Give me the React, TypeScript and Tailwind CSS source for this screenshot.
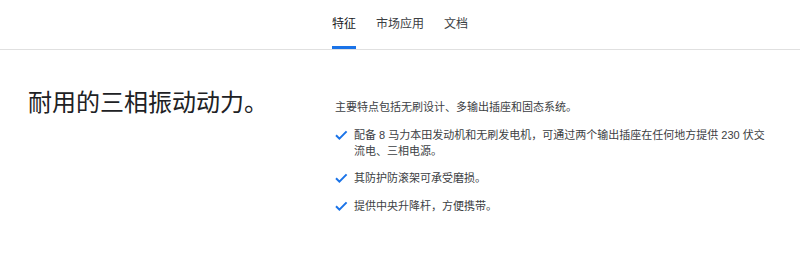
import React from 'react'

const tabs = [
  { label: '特征', active: true },
  { label: '市场应用', active: false },
  { label: '文档', active: false },
]

const points = [
  '配备 8 马力本田发动机和无刷发电机，可通过两个输出插座在任何地方提供 230 伏交流电、三相电源。',
  '其防护防滚架可承受磨损。',
  '提供中央升降杆，方便携带。',
]

function Check() {
  return (
    <svg viewBox="0 0 14 14" className="mt-[1px] h-[14px] w-[14px] shrink-0">
      <path d="M2 7.2l3.4 3.4L12.6 3.4" fill="none" stroke="#1a73e8" strokeWidth="2" />
    </svg>
  )
}

export default function App() {
  return (
    <div className="min-h-screen bg-white text-[#3c4043] font-['Liberation_Sans','Noto_Sans_CJK_SC',sans-serif]">
      <nav className="flex h-[50px] justify-center border-b border-[#e0e0e0]">
        {tabs.map((t) => (
          <a
            key={t.label}
            className={
              t.active
                ? 'mx-[10px] flex h-[49px] items-center border-b-[3px] border-[#1a73e8] pt-[2px] text-[12px] text-[#202124]'
                : 'mx-[10px] flex h-[49px] items-center border-b-[3px] border-transparent pt-[2px] text-[12px] text-[#3c4043]'
            }
          >
            {t.label}
          </a>
        ))}
      </nav>

      <main className="flex pl-[28px]">
        <div className="w-[306px] shrink-0 pt-[37px]">
          <h2 className="text-[24px] leading-[32px] text-[#202124]">耐用的三相振动动力。</h2>
        </div>
        <div className="w-[436px] pt-[49px] text-[11px] leading-[16px]">
          <p className="pl-[1px]">主要特点包括无刷设计、多输出插座和固态系统。</p>
          <ul className="mt-[11.5px] flex flex-col gap-[11.5px]">
            {points.map((p) => (
              <li key={p} className="flex gap-[6px]">
                <Check />
                <span>{p}</span>
              </li>
            ))}
          </ul>
        </div>
      </main>
    </div>
  )
}
